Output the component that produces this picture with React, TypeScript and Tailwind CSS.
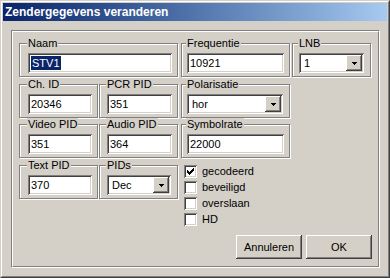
import React from 'react';

const sunken =
  'shadow-[inset_1px_1px_0_#808080,inset_-1px_-1px_0_#fff,inset_2px_2px_0_#404040,inset_-2px_-2px_0_#d4d0c8]';
const raised =
  'shadow-[inset_-1px_-1px_0_#404040,inset_1px_1px_0_#fff,inset_-2px_-2px_0_#808080,inset_2px_2px_0_#d4d0c8]';

const Group: React.FC<{ label: string; className?: string; children?: React.ReactNode }> = ({
  label,
  className = '',
  children,
}) => (
  <fieldset
    className={`h-[40px] border border-[#808080] shadow-[inset_1px_1px_0_#fff,1px_1px_0_#fff] pt-[3px] ${className}`}
  >
    <legend className="ml-[-1px] px-[1px] bg-[#d4d0c8] text-[11px] leading-[13px]">{label}</legend>
    {children}
  </fieldset>
);

const Field: React.FC<{ value: React.ReactNode; className?: string }> = ({ value, className = '' }) => (
  <div className={`h-[20px] bg-white pl-[3px] text-[11px] leading-[20px] ${sunken} ${className}`}>{value}</div>
);

const Arrow = () => (
  <svg width="5" height="3" viewBox="0 0 5 3" shapeRendering="crispEdges">
    <path d="M0 0h5v1H0zM1 1h3v1H1zM2 2h1v1H2z" fill="#000" />
  </svg>
);

const Combo: React.FC<{ value: string; className?: string }> = ({ value, className = '' }) => (
  <div className={`h-[20px] bg-white p-[2px] flex ${sunken} ${className}`}>
    <div className="flex-1 pl-[3px] text-[11px] leading-[16px]">{value}</div>
    <div className={`w-[16px] h-[16px] bg-[#d4d0c8] flex items-center justify-center ${raised}`}>
      <Arrow />
    </div>
  </div>
);

const Check = () => (
  <svg width="7" height="7" viewBox="0 0 7 7" shapeRendering="crispEdges">
    <path
      d="M6 0h1v1H6zM5 1h2v1H5zM0 2h1v1H0zM4 2h3v1H4zM0 3h2v1H0zM3 3h3v1H3zM0 4h5v1H0zM1 5h3v1H1zM2 6h1v1H2z"
      fill="#000"
    />
  </svg>
);

const CheckRow: React.FC<{ label: string; checked?: boolean }> = ({ label, checked }) => (
  <div className="h-[13px] flex items-center gap-[5px]">
    <div className={`w-[13px] h-[13px] bg-white flex items-center justify-center ${sunken}`}>
      {checked && <Check />}
    </div>
    <span className="text-[11px] leading-[13px]">{label}</span>
  </div>
);

const Button: React.FC<{ label: string }> = ({ label }) => (
  <div className={`w-[66px] h-[24px] bg-[#d4d0c8] flex items-center justify-center text-[11px] ${raised}`}>
    {label}
  </div>
);

export default function App() {
  return (
    <div className="w-[390px] h-[278px] bg-[#d4d0c8] border border-t-[#d4d0c8] border-l-[#d4d0c8] border-r-[#404040] border-b-[#404040] text-black font-['Liberation_Sans',Arial,sans-serif]">
      <div className="h-full border border-t-white border-l-white border-r-[#808080] border-b-[#808080] p-[1px] flex flex-col">
        <div className="h-[18px] shrink-0 bg-gradient-to-r from-[#0a246a] to-[#a6caf0] text-white font-bold text-[12px] leading-[18px] pl-[2px]">
          Zendergegevens veranderen
        </div>

        <div className="flex-1 mt-[9px] ml-[8px] mr-[7px] mb-[7px] border border-t-[#808080] border-l-[#808080] border-r-white border-b-white">
          <div className="h-full border border-t-white border-l-white border-r-[#808080] border-b-[#808080] pt-[5px] pl-[6px] pr-[6px] pb-[7px] flex flex-col">
            <div className="flex h-[41px]">
              <Group label="Naam" className="w-[159px] mr-[3px] pl-[8px]">
                <Field
                  className="w-[144px] pl-[2px]"
                  value={<span className="bg-[#0a246a] text-white px-[1px] leading-[14px] inline-block">STV1</span>}
                />
              </Group>
              <Group label="Frequentie" className="w-[109px] mr-[2px] pl-[5px]">
                <Field className="w-[97px]" value="10921" />
              </Group>
              <Group label="LNB" className="w-[79px] pl-[6px]">
                <Combo className="w-[65px]" value="1" />
              </Group>
            </div>

            <div className="flex h-[40px]">
              <Group label="Ch. ID" className="w-[79px] mr-[1px] pl-[8px]">
                <Field className="w-[64px]" value="20346" />
              </Group>
              <Group label="PCR PID" className="w-[79px] mr-[3px] pl-[7px]">
                <Field className="w-[65px]" value="351" />
              </Group>
              <Group label="Polarisatie" className="w-[109px] pl-[5px]">
                <Combo className="w-[96px]" value="hor" />
              </Group>
            </div>

            <div className="flex h-[41px]">
              <Group label="Video PID" className="w-[79px] mr-[1px] pl-[8px]">
                <Field className="w-[64px]" value="351" />
              </Group>
              <Group label="Audio PID" className="w-[79px] mr-[3px] pl-[7px]">
                <Field className="w-[65px]" value="364" />
              </Group>
              <Group label="Symbolrate" className="w-[109px] pl-[5px]">
                <Field className="w-[97px]" value="22000" />
              </Group>
            </div>

            <div className="flex">
              <Group label="Text PID" className="w-[79px] mr-[1px] pl-[8px]">
                <Field className="w-[64px]" value="370" />
              </Group>
              <Group label="PIDs" className="w-[79px] pl-[7px]">
                <Combo className="w-[64px]" value="Dec" />
              </Group>
              <div className="ml-[6px] pt-[6px] flex flex-col gap-[3px]">
                <CheckRow label="gecodeerd" checked />
                <CheckRow label="beveiligd" />
                <CheckRow label="overslaan" />
                <CheckRow label="HD" />
              </div>
            </div>

            <div className="mt-auto flex justify-end gap-[4px]">
              <Button label="Annuleren" />
              <Button label="OK" />
            </div>
          </div>
        </div>
      </div>
    </div>
  );
}
